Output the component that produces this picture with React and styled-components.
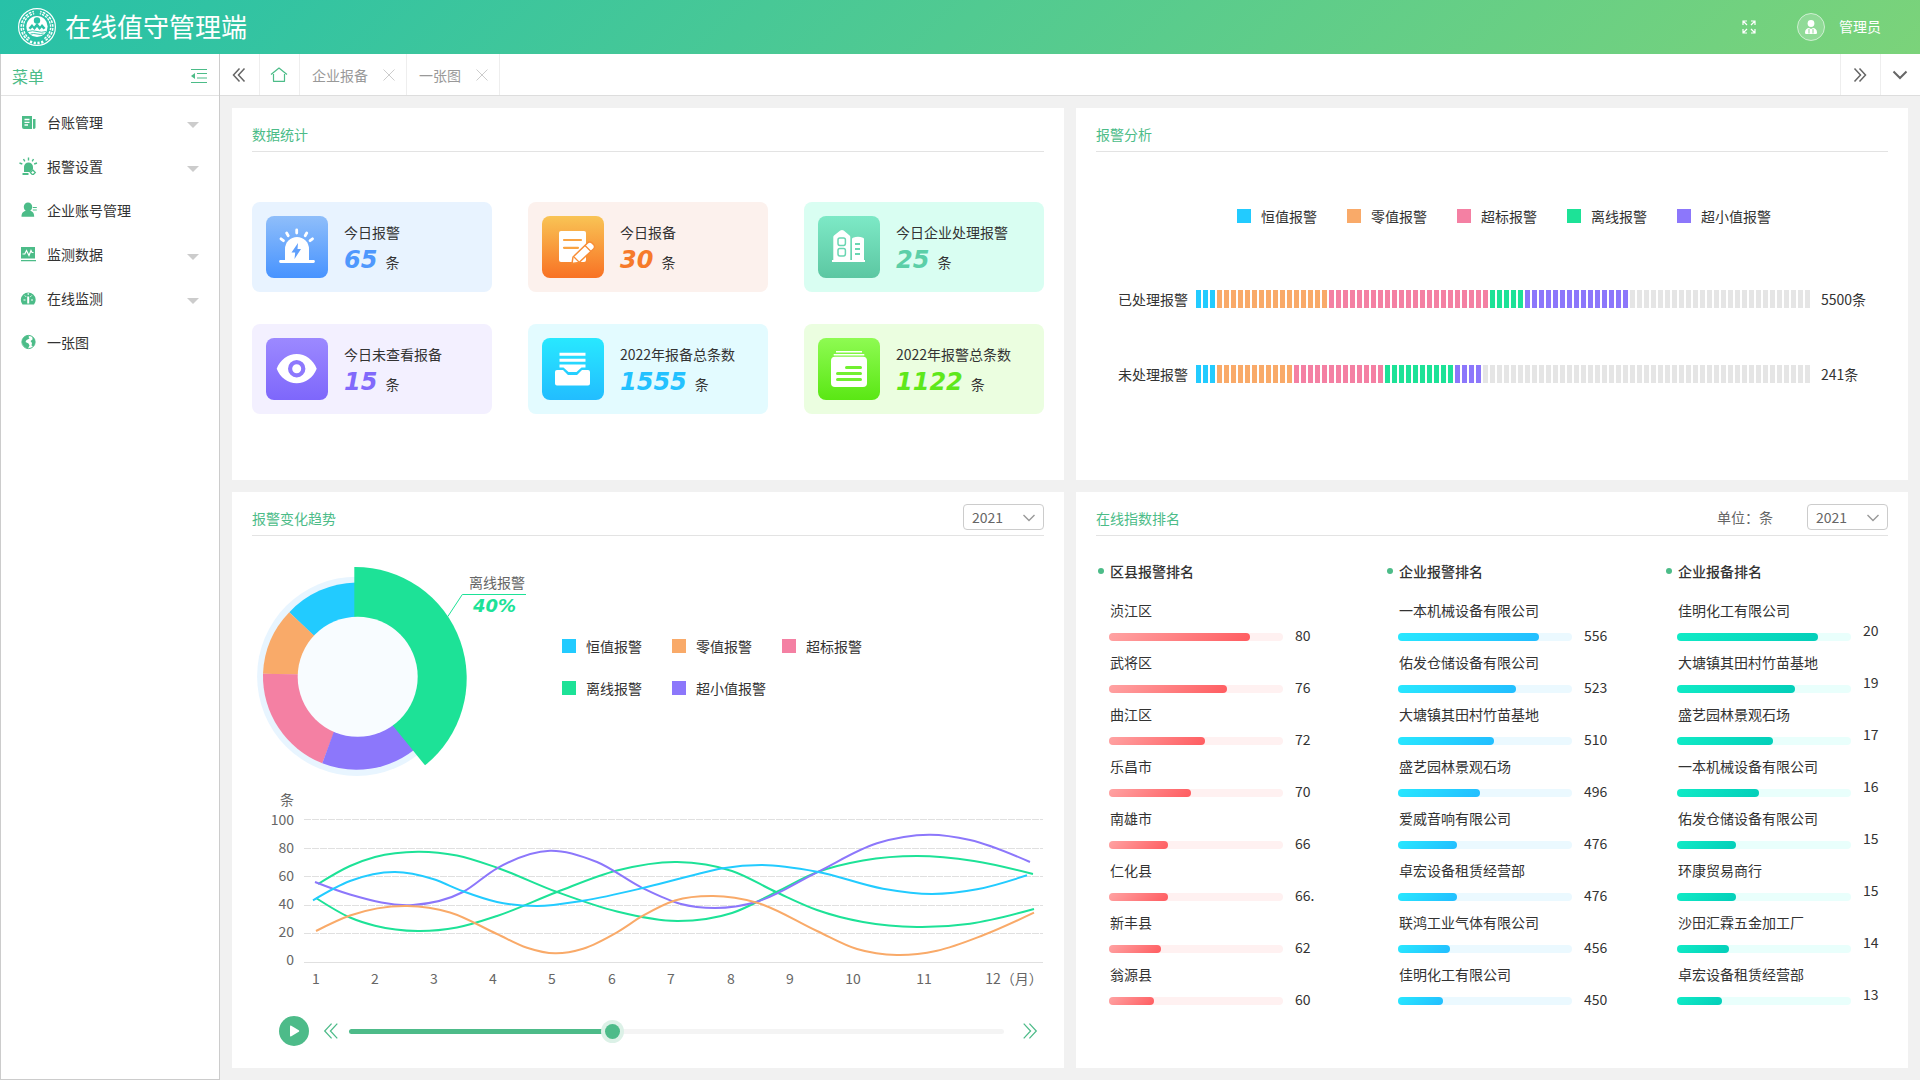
import React, { useState } from "react";
import styled, { createGlobalStyle } from "styled-components";

const GlobalStyle = createGlobalStyle`
  * {
    box-sizing: border-box;
  }
  body {
    margin: 0;
    background: #f1f1f1;
    color: #333;
    font-family: "Noto Sans CJK SC", "Noto Sans", sans-serif;
    font-size: 14px;
    line-height: 24px;
  }
  ul {
    list-style: none;
    margin: 0;
    padding: 0;
  }
  h1, h2, h3, p {
    margin: 0;
    font-weight: 400;
  }
  button {
    padding: 0;
    border: 0;
    background: none;
    font: inherit;
    color: inherit;
    cursor: pointer;
  }
  a {
    color: inherit;
    text-decoration: none;
  }
  svg {
    display: block;
    flex: none;
  }
`;

const Page = styled.div`
  display: flex;
  flex-direction: column;
  min-height: 100vh;
`;

const Header = styled.header`
  display: flex;
  align-items: center;
  height: 54px;
  padding: 0 39px 0 17px;
  background: linear-gradient(135deg, #27c1a8, #7bd37a);
  color: #fff;
  h1 {
    flex: 1;
    margin-left: 8px;
    padding-bottom: 2px;
    font-size: 26px;
    line-height: 38px;
  }
`;

const UserButton = styled.button`
  display: flex;
  align-items: center;
  gap: 14px;
  margin-left: 41px;
  span {
    padding-bottom: 2px;
  }
`;

const Body = styled.div`
  display: flex;
  flex: 1;
`;

const Sidebar = styled.nav`
  width: 220px;
  flex: none;
  border: 1px solid #ccc;
  border-top: 0;
  background: #fff;
`;

const SidebarHead = styled.div`
  display: flex;
  justify-content: space-between;
  align-items: center;
  height: 42px;
  padding: 2px 12px 0 11px;
  border-bottom: 1px solid #e3e3e3;
  color: #4cbc88;
  h2 {
    font-size: 16px;
  }
`;

const MenuList = styled.ul`
  padding-top: 4px;
`;

const MenuLink = styled.a`
  display: flex;
  align-items: center;
  height: 44px;
  padding: 0 20px 0 18px;
  span {
    flex: 1;
    margin-left: 8px;
  }
`;

const Caret = styled.i`
  margin-top: 5px;
  border: 6px solid transparent;
  border-top-color: #ccc;
  border-bottom: 0;
`;

const Main = styled.main`
  display: flex;
  flex-direction: column;
  flex: 1;
  min-width: 0;
`;

const TabBar = styled.div`
  display: flex;
  height: 42px;
  border-bottom: 1px solid #ddd;
  background: #fff;
  color: #666;
`;

const TabButton = styled.button`
  display: flex;
  align-items: center;
  justify-content: center;
  width: 40px;
  padding-right: 2px;
  border: 0 solid #eee;
  border-right-width: ${(props) => (props.$side === "right" ? 0 : "1px")};
  border-left-width: ${(props) => (props.$side === "right" ? "1px" : 0)};
`;

const Tab = styled.div`
  display: flex;
  align-items: center;
  gap: 15px;
  padding: 0 11px 0 12px;
  border-right: 1px solid #eee;
  color: #999;
`;

const Spacer = styled.div`
  flex: 1;
`;

const Dashboard = styled.div`
  display: grid;
  grid-template-columns: 1fr 1fr;
  grid-template-rows: 31fr 48fr;
  gap: 12px;
  flex: 1;
  padding: 12px;
`;

const Panel = styled.section`
  padding: 0 20px;
  background: #fff;
`;

const PanelHead = styled.div`
  display: flex;
  align-items: flex-end;
  height: 44px;
  padding-bottom: 5px;
  border-bottom: 1px solid #e3e3e3;
  h2 {
    flex: 1;
    font-size: 14px;
    color: #4cbc88;
  }
  p {
    margin-right: 34px;
    line-height: 26px;
    color: #666;
  }
`;

const SelectBox = styled.div`
  position: relative;
  select {
    display: block;
    width: 81px;
    height: 26px;
    padding: 0 8px;
    appearance: none;
    border: 1px solid #ccc;
    border-radius: 4px;
    background: #fff;
    font: inherit;
    line-height: 24px;
    color: #666;
  }
  svg {
    position: absolute;
    top: 10px;
    right: 9px;
    pointer-events: none;
  }
`;

const CardGrid = styled.ul`
  display: grid;
  grid-template-columns: repeat(3, 1fr);
  gap: 32px 36px;
  padding: 50px 0;
`;

const Card = styled.li`
  display: flex;
  height: 90px;
  padding: 14px;
  border-radius: 8px;
  background: ${(props) => props.$background};
`;

const CardIcon = styled.div`
  width: 62px;
  height: 62px;
  border-radius: 8px;
  background: linear-gradient(${(props) => props.$from}, ${(props) => props.$to});
`;

const CardText = styled.div`
  margin-left: 16px;
  padding-top: 4px;
`;

const CardValue = styled.p`
  display: flex;
  align-items: baseline;
  gap: 8px;
  margin-top: 2px;
  line-height: 28px;
  strong {
    font: italic 700 24px/28px "DejaVu Sans", sans-serif;
    color: ${(props) => props.$color};
  }
`;

const Legend = styled.ul`
  display: grid;
  grid-template-columns: repeat(${(props) => props.$columns}, 80px);
  gap: 18px 30px;
`;

const LegendItem = styled.li`
  display: flex;
  align-items: center;
  gap: 10px;
  white-space: nowrap;
  &::before {
    content: "";
    flex: none;
    width: 14px;
    height: 14px;
    background: ${(props) => props.$color};
  }
`;

const Analysis = styled.div`
  display: flex;
  flex-direction: column;
  align-items: center;
  padding: 52px 0 53px 10px;
`;

const SegmentList = styled.ul`
  display: flex;
  flex-direction: column;
  gap: 51px;
  width: 100%;
  padding: 59px 0 0 12px;
`;

const SegmentRow = styled.li`
  display: flex;
  align-items: center;
  > span:last-child {
    width: 67px;
  }
`;

const SegmentBar = styled.div`
  display: flex;
  flex: 1;
  gap: 2px;
  height: 18px;
  margin: 0 11px 0 8px;
`;

const Segment = styled.i`
  flex: 1;
  background: ${(props) => props.$color};
`;

const Share = styled.div`
  display: flex;
  align-items: center;
  gap: 32px;
  padding-top: 24px;
  > ul {
    margin-bottom: 6px;
  }
  svg text {
    font-size: 14px;
    fill: #666;
  }
  svg .percent {
    font: italic 700 18px "DejaVu Sans", sans-serif;
    fill: #1de297;
  }
`;

const LineChart = styled.svg`
  width: 100%;
  margin-top: 4px;
  text {
    font-size: 14px;
    fill: #666;
  }
`;

const Player = styled.div`
  display: flex;
  align-items: center;
  padding: 24px 6px 22px 27px;
  color: #4dbb89;
`;

const PlayButton = styled.button`
  display: flex;
  align-items: center;
  justify-content: center;
  width: 30px;
  height: 30px;
  margin-right: 14px;
  border-radius: 50%;
  background: #4dbb89;
`;

const Range = styled.input`
  flex: 1;
  height: 5px;
  margin: 0 18px 0 10px;
  appearance: none;
  border-radius: 3px;
  background: linear-gradient(
    90deg,
    #4dbb89 ${(props) => props.value}%,
    #f4f4f4 ${(props) => props.value}%
  );
  &::-webkit-slider-thumb {
    appearance: none;
    width: 15px;
    height: 15px;
    border-radius: 50%;
    background: #4dbb89;
    box-shadow: 0 0 0 4px #dcf1e7;
  }
`;

const RankGrid = styled.div`
  display: grid;
  grid-template-columns: 289fr 279fr 222fr;
  padding: 23px 0 24px 2px;
`;

const RankTitle = styled.h3`
  display: flex;
  align-items: center;
  gap: 6px;
  margin-bottom: 15px;
  font-size: 14px;
  font-weight: 500;
  &::before {
    content: "";
    width: 6px;
    height: 6px;
    border-radius: 50%;
    background: #4cbc88;
  }
`;

const RankItem = styled.li`
  padding-left: 12px;
  white-space: nowrap;
`;

const Meter = styled.div`
  display: flex;
  align-items: flex-start;
  gap: 12px;
  height: 28px;
  margin-left: -1px;
  line-height: ${(props) => (props.$raised ? "16px" : "26px")};
`;

const MeterTrack = styled.div`
  width: 174px;
  height: 8px;
  margin-top: 11px;
  border-radius: 4px;
  background: ${(props) => props.$color};
`;

const MeterFill = styled.div`
  height: 8px;
  border-radius: 4px;
  background: linear-gradient(135deg, ${(props) => props.$from}, ${(props) => props.$to});
`;

const alarmTypes = [
  { name: "恒值报警", color: "#22cbff" },
  { name: "零值报警", color: "#f9aa69" },
  { name: "超标报警", color: "#f480a3" },
  { name: "离线报警", color: "#1de297" },
  { name: "超小值报警", color: "#8c77fb" },
];

const SEGMENT_COUNT = 88;

const analysisRows = [
  { name: "已处理报警", counts: [3, 16, 23, 5, 15], total: "5500条" },
  { name: "未处理报警", counts: [3, 11, 13, 10, 4], total: "241条" },
];

const green = "#4cbc88";

const menuItems = [
  {
    name: "台账管理",
    open: true,
    icon: (
      <>
        <path d="M2 2h10v13H4a2 2 0 0 1-2-2z" fill={green} />
        <path d="M13 5h2.500v8.500a1.500 1.500 0 0 1-2.500 1z" fill={green} />
        <path d="M4.500 5.500h5M4.500 8.300h5M4.500 11h3.500" stroke="#fff" strokeWidth="1.300" />
      </>
    ),
  },
  {
    name: "报警设置",
    open: true,
    icon: (
      <>
        <path d="M4 14V9a4.500 4.500 0 0 1 9 0v2l-3 3zM2.500 15h6v2h-6z" fill={green} />
        <path
          d="M8.500-.500v3M3.500 1l1.300 2.300M13.500 1l-1.300 2.300M-.500 5l2.800 1M17 5l-2.800 1"
          stroke={green}
          strokeWidth="1.400"
        />
        <path d="M12.800 12l2.500 2.500-2.500 2.500-2.500-2.500z" fill="#fff" stroke={green} strokeWidth="1.300" />
      </>
    ),
  },
  {
    name: "企业账号管理",
    icon: (
      <>
        <path
          d="M8 .500a4.200 4.200 0 0 1 4.200 4.300c0 1.800-.800 3.200-2 4 2.400.700 4 2.200 4 6H1.500c0-3.800 1.800-5.300 4.300-6-1.300-.800-2-2.200-2-4A4.200 4.200 0 0 1 8 .500z"
          fill={green}
        />
        <path d="M12.800 5.500h4M12.800 8h4" stroke={green} />
      </>
    ),
  },
  {
    name: "监测数据",
    open: true,
    icon: (
      <>
        <path d="M1 1h14v11.500H1zM1 14h15v1.200H1z" fill={green} />
        <path d="M2.500 8h2.300l1.700-3.500 2.500 5 2-5 1 2h1.500" fill="none" stroke="#fff" strokeWidth="1.200" />
      </>
    ),
  },
  {
    name: "在线监测",
    open: true,
    icon: (
      <>
        <path d="M2.500 14.500A7.400 7.400 0 1 1 14 14.500z" fill={green} />
        <path d="M8.200 6.500v7" stroke="#fff" strokeWidth="2" />
        <path d="M8.200 3v2M3.500 10h2M11 10h2M4.800 5.500l1.300 1.300M11.700 5.500l-1.300 1.300" stroke="#fff" />
      </>
    ),
  },
  {
    name: "一张图",
    icon: (
      <>
        <circle cx="8.500" cy="8" r="6.600" fill="#fff" stroke={green} />
        <path d="M2 8.500C1.800 4 5 1 9.500 1.500L8.500 3l1 1.500L6.500 6l-1 2 3 1.500 1 2-1.500 3C5 14 3 12 2 8.500z" fill={green} />
        <path d="M12.500 2.800c3 2 3.500 6.500 1 9.700l-2-1 .500-2.500-1.500-2 2-1.500z" fill={green} />
      </>
    ),
  },
];

const stats = [
  {
    name: "今日报警",
    value: "65",
    background: "#e8f3ff",
    from: "#8fbefa",
    to: "#4793ff",
    color: "#4f98fd",
    icon: (
      <>
        <path d="M19 45V33a12 12 0 0 1 24 0v12z" fill="#fff" />
        <path
          d="M14.500 45.500h33M30.700 14v3M20.700 17l1.500 2.700M40.700 17l-1.500 2.700M15 22.800l2.400 1.900M46.500 22.800l-2.400 1.900"
          stroke="#fff"
          strokeWidth="2.800"
          strokeLinecap="round"
        />
        <path d="M32 27l-6.500 9.500h3.700L28.500 43 35 33h-3.500z" fill="#5f9ffc" />
      </>
    ),
  },
  {
    name: "今日报备",
    value: "30",
    background: "#fcf1ed",
    from: "#f9c455",
    to: "#f87224",
    color: "#f67a2a",
    icon: (
      <>
        <rect x="17" y="15" width="27" height="31" rx="2" fill="#fff" />
        <path d="M22 24h17M22 31.800h14" stroke="#f9a443" strokeWidth="2.200" strokeLinecap="round" />
        <path
          d="M30 47.500l1-6.500 14.500-14a3 3 0 0 1 4.500 0l1.500 1.500a3 3 0 0 1 0 4.500l-14.500 13.500z"
          fill="#fff"
          stroke="#f88d36"
          strokeWidth="1.500"
        />
        <path d="M43 29.500l6 6M32 41l5 5" stroke="#f88d36" strokeWidth="1.300" />
      </>
    ),
  },
  {
    name: "今日企业处理报警",
    value: "25",
    background: "#d9fef2",
    from: "#7de9c6",
    to: "#5cc7a2",
    color: "#5ccfa8",
    icon: (
      <>
        <path d="M15.300 45V21q0-1 1-1.800l6-4.600q1.700-1.200 3.400 0l5.600 4.600q1 .8 1 1.800v24z" fill="#fff" />
        <path d="M34 45V23q0-1 1-1.300 5-1.700 10 0 1 .3 1 1.300v22z" fill="#fff" />
        <path d="M14 45h33" stroke="#fff" strokeWidth="1.800" />
        <rect x="20" y="22" width="7.400" height="7.400" rx="1.800" fill="none" stroke="#6ad6b2" strokeWidth="1.500" />
        <rect x="20" y="32.500" width="7.400" height="7.400" rx="1.800" fill="none" stroke="#6ad6b2" strokeWidth="1.500" />
        <path d="M37 28h5M37 33h5M37 38h5" stroke="#6ad6b2" strokeWidth="1.800" />
      </>
    ),
  },
  {
    name: "今日未查看报备",
    value: "15",
    background: "#f3f0ff",
    from: "#9c89ff",
    to: "#7e67fb",
    color: "#8169fb",
    icon: (
      <>
        <path
          d="M10.700 30.700C14 22 22 16 30.700 16s16.700 6 20 14.700c-3.300 8.700-11.300 14.600-20 14.600s-16.700-5.900-20-14.600z"
          fill="#fff"
        />
        <circle cx="30.700" cy="30.700" r="6.600" fill="#fff" stroke="#8d78fd" strokeWidth="4.200" />
      </>
    ),
  },
  {
    name: "2022年报备总条数",
    value: "1555",
    background: "#e3fbff",
    from: "#28e8ff",
    to: "#22bdff",
    color: "#23c1ff",
    icon: (
      <>
        <path d="M17.500 16.300h26M17.500 22.300h26" stroke="#fff" strokeWidth="3" />
        <path d="M17.500 26.500h26v3h-4L34.500 34h-8l-5-4.500h-4z" fill="#fff" />
        <path
          d="M15 32h6l5 5h9l5-5h6a2 2 0 0 1 2 2v11.500a2 2 0 0 1-2 2H15a2 2 0 0 1-2-2V34a2 2 0 0 1 2-2z"
          fill="#fff"
        />
      </>
    ),
  },
  {
    name: "2022年报警总条数",
    value: "1122",
    background: "#ebfee0",
    from: "#8efb52",
    to: "#5ae714",
    color: "#5ee81b",
    icon: (
      <>
        <path d="M18 13.700h26M15.700 16.800h30.600" stroke="#fff" strokeWidth="1.500" />
        <rect x="13" y="18.700" width="36" height="30.300" rx="4" fill="#fff" />
        <path
          d="M28.500 29.500h14M19.500 35.500h23M19.500 41.500h23"
          stroke="#71f030"
          strokeWidth="3"
          strokeLinecap="round"
        />
      </>
    ),
  },
];

const shares = [
  { color: "#22cbff", path: "M104 116L37.300 52.300A93.800 93.800 0 0 1 104 22.400z" },
  { color: "#f9aa69", path: "M105 116L11 113.700A93.800 93.800 0 0 1 37.300 52.300z" },
  { color: "#f480a3", path: "M104 115.200L70.300 203.300A93.800 93.800 0 0 1 11 113.700z" },
  { color: "#8c77fb", path: "M103 114L162 190A93.800 93.800 0 0 1 70.300 203.300z" },
  { color: "#1de297", path: "M102.300 118L102.300 7A111.400 111.400 0 0 1 173 205.300z" },
];

const series = [
  {
    color: "#1de297",
    points: [[66, 100], [98, 82], [123, 73], [166, 67.700], [205, 71.500], [245, 83.700], [305, 108], [365, 127.500], [426, 137], [480, 129], [525, 107.700], [565, 88.300], [611, 76.500], [665, 72], [722, 77], [781, 90]],
  },
  {
    color: "#1de297",
    points: [[64, 114], [98, 133.500], [123, 141.700], [166, 147], [205, 143.500], [245, 132], [305, 108], [365, 86.500], [425, 78], [480, 87], [525, 108.500], [565, 126], [611, 138], [665, 143], [718, 139.700], [782, 125]],
  },
  {
    color: "#8c77fb",
    points: [[63, 98], [98, 110.500], [161, 121], [211, 108], [245, 84.300], [298, 66.700], [345, 78], [391, 104.300], [428, 119.700], [463, 124], [505, 117.700], [565, 88.300], [625, 59.300], [678, 50.700], [718, 56], [778, 78]],
  },
  {
    color: "#22cbff",
    points: [[61, 116.300], [98, 97], [143, 88], [181, 95], [211, 107.300], [245, 118], [285, 122], [331, 116.700], [391, 104], [438, 92], [471, 84.200], [510, 81], [565, 87.700], [631, 104.700], [680, 110], [725, 105.300], [775, 91.300]],
  },
  {
    color: "#f9aa69",
    points: [[64, 147], [98, 131.500], [155, 122], [198, 128.500], [245, 150], [275, 163.700], [303, 169.300], [331, 164.700], [365, 148.300], [391, 131.700], [423, 116.500], [461, 112], [505, 118.700], [565, 147], [605, 165], [645, 171], [685, 166.700], [731, 151.300], [782, 128.700]],
  },
];

const months = [
  ["1", 64], ["2", 123], ["3", 182], ["4", 241], ["5", 300], ["6", 360], ["7", 419],
  ["8", 479], ["9", 538], ["10", 601], ["11", 672], ["12（月）", 762],
];

const percents = [81, 68, 55, 47, 34, 34, 30, 26];

const rankings = [
  {
    title: "区县报警排名",
    from: "#ffa3a3",
    to: "#ff5c60",
    track: "#fff1f1",
    rows: [
      ["浈江区", "80"], ["武将区", "76"], ["曲江区", "72"], ["乐昌市", "70"],
      ["南雄市", "66"], ["仁化县", "66."], ["新丰县", "62"], ["翁源县", "60"],
    ],
  },
  {
    title: "企业报警排名",
    from: "#28e8ff",
    to: "#22bdff",
    track: "#ebf9ff",
    rows: [
      ["一本机械设备有限公司", "556"], ["佑发仓储设备有限公司", "523"],
      ["大塘镇其田村竹苗基地", "510"], ["盛艺园林景观石场", "496"],
      ["爱威音响有限公司", "476"], ["卓宏设备租赁经营部", "476"],
      ["联鸿工业气体有限公司", "456"], ["佳明化工有限公司", "450"],
    ],
  },
  {
    title: "企业报备排名",
    from: "#10ebc6",
    to: "#03ceb9",
    track: "#e9fffc",
    raised: true,
    rows: [
      ["佳明化工有限公司", "20"], ["大塘镇其田村竹苗基地", "19"],
      ["盛艺园林景观石场", "17"], ["一本机械设备有限公司", "16"],
      ["佑发仓储设备有限公司", "15"], ["环康贸易商行", "15"],
      ["沙田汇霖五金加工厂", "14"], ["卓宏设备租赁经营部", "13"],
    ],
  },
];

// smooth curve through the points, each slope is that of the parabola
// through the point and its two neighbours
const toPath = (points) => {
  const last = points.length - 1;
  const rise = (i) => (points[i + 1][1] - points[i][1]) / (points[i + 1][0] - points[i][0]);
  const slope = (i) => {
    if (i === 0) return (3 * rise(0) - slope(1)) / 2;
    if (i === last) return (3 * rise(last - 1) - slope(last - 1)) / 2;
    const before = points[i][0] - points[i - 1][0];
    const after = points[i + 1][0] - points[i][0];
    return (rise(i - 1) * after + rise(i) * before) / (before + after);
  };
  return points.reduce((path, [x, y], i) => {
    if (i === 0) return `M${x} ${y}`;
    const [px, py] = points[i - 1];
    const dx = (x - px) / 3;
    return `${path}C${px + dx} ${py + dx * slope(i - 1)} ${x - dx} ${y - dx * slope(i)} ${x} ${y}`;
  }, "");
};

const Logo = () => (
  <svg width="40" height="40" viewBox="0 0 40 40" fill="none">
    <circle cx="20" cy="20" r="18.400" stroke="#fff" strokeWidth="1.200" />
    <path d="M12 32.500A14.800 14.800 0 0 1 17 5.600M28 32.500A14.800 14.800 0 0 0 23 5.600" stroke="#fff" strokeWidth="3.600" strokeDasharray="2.600 1.100" />
    <path d="M12 32.500A14.800 14.800 0 0 1 17 5.600M28 32.500A14.800 14.800 0 0 0 23 5.600" stroke="#29c1a6" strokeWidth=".8" />
    <circle cx="20" cy="19.500" r="10.600" fill="#fff" />
    <circle cx="20" cy="13.500" r="3.200" fill="#29c1a6" />
    <path d="M11.500 21l3.500-4 2 2.500 3-3.500 3 3.500 2-2.500 3.500 4-2 1.500-1.800-2-2.200 2.500-2.500-3-2.500 3-2.200-2.500-1.800 2z" fill="#29c1a6" />
    <path d="M11 24.500q4.500-1.500 9 0t9 0M13.500 27q3-1 6.500 0t6.500 0" stroke="#29c1a6" strokeWidth=".9" />
    <path d="M13 34.500q7 3 14 0" stroke="#fff" strokeWidth="2.600" strokeDasharray="2.200 1.600" />
  </svg>
);

const DoubleArrow = ({ right, size = 14, width = 1.5 }) => (
  <svg width={size} height={size} viewBox="0 0 14 14" fill="none" stroke="currentColor" strokeWidth={width}>
    <path d={right ? "M1.500.500L7.500 7l-6 6.500M6.500.500l6 6.500-6 6.500" : "M7.500.500L1.500 7l6 6.500M12.500.500L6.500 7l6 6.500"} />
  </svg>
);

const CloseIcon = () => (
  <svg width="12" height="12" viewBox="0 0 12 12" stroke="#ccc">
    <path d="M.500.500l11 11M11.500.500l-11 11" />
  </svg>
);

const YearSelect = ({ label }) => (
  <SelectBox>
    <select aria-label={label} defaultValue="2021">
      <option>2021</option>
      <option>2022</option>
    </select>
    <svg width="12" height="8" viewBox="0 0 12 8" fill="none" stroke="#999" strokeWidth="1.400">
      <path d="M.500 1L6 6.500 11.500 1" />
    </svg>
  </SelectBox>
);

const AlarmLegend = ({ columns }) => (
  <Legend $columns={columns}>
    {alarmTypes.map((type) => (
      <LegendItem key={type.name} $color={type.color}>
        {type.name}
      </LegendItem>
    ))}
  </Legend>
);

const segmentColor = (counts, index) => {
  let end = 0;
  const found = counts.findIndex((count) => {
    end += count;
    return index < end;
  });
  return found < 0 ? "#e5e5e5" : alarmTypes[found].color;
};

const App = () => {
  const [progress, setProgress] = useState(40);

  return (
    <Page>
      <GlobalStyle />
      <Header>
        <Logo />
        <h1>在线值守管理端</h1>
        <button aria-label="全屏">
          <svg width="14" height="14" viewBox="0 0 14 14" fill="none" stroke="#fff" strokeWidth="1.200">
            <path d="M1 5V1h4M1 1l4 4M9 1h4v4M13 1L9 5M1 9v4h4M1 13l4-4M13 9v4H9M13 13L9 9" />
          </svg>
        </button>
        <UserButton>
          <svg width="28" height="28" viewBox="0 0 28 28">
            <circle cx="14" cy="14" r="13.500" fill="#fff" fillOpacity=".2" stroke="#fff" strokeOpacity=".6" />
            <circle cx="14" cy="10.500" r="3.400" fill="#fff" />
            <path d="M8 19.500c0-3 2-4.500 4-4.500l2 1 2-1c2 0 4 1.500 4 4.500 0 1-.5 1.500-1.500 1.500h-9c-1 0-1.500-.5-1.500-1.500z" fill="#fff" />
            <path d="M12 16v4.500M16 16v4.500" stroke="#8cd993" />
          </svg>
          <span>管理员</span>
        </UserButton>
      </Header>
      <Body>
        <Sidebar>
          <SidebarHead>
            <h2>菜单</h2>
            <button aria-label="收起菜单">
              <svg width="16" height="14" viewBox="0 0 16 14">
                <path d="M0 .500h16M6 4.500h10M6 9h10M0 13.500h16" stroke="#4cbc88" strokeWidth="1.200" />
                <path d="M0 7l4-3v6z" fill="#4cbc88" />
              </svg>
            </button>
          </SidebarHead>
          <MenuList>
            {menuItems.map((item) => (
              <li key={item.name}>
                <MenuLink href="#">
                  <svg width="20" height="18" viewBox="-1 -1 20 18">
                    {item.icon}
                  </svg>
                  <span>{item.name}</span>
                  {item.open && <Caret />}
                </MenuLink>
              </li>
            ))}
          </MenuList>
        </Sidebar>
        <Main>
          <TabBar>
            <TabButton aria-label="向左">
              <DoubleArrow />
            </TabButton>
            <TabButton aria-label="首页">
              <svg width="18" height="16" viewBox="0 0 18 16" fill="none" stroke="#4cbc88" strokeWidth="1.200">
                <path d="M3.500 7v7.300h11V7M1 7.500L9 1l8 6.500" strokeLinejoin="round" />
              </svg>
            </TabButton>
            {["企业报备", "一张图"].map((name) => (
              <Tab key={name}>
                <button>{name}</button>
                <button aria-label={`关闭${name}`}>
                  <CloseIcon />
                </button>
              </Tab>
            ))}
            <Spacer />
            <TabButton $side="right" aria-label="向右">
              <DoubleArrow right />
            </TabButton>
            <TabButton $side="right" aria-label="更多">
              <svg width="16" height="10" viewBox="0 0 16 10" fill="none" stroke="#666" strokeWidth="2">
                <path d="M1.500 1.500L8 8l6.500-6.500" />
              </svg>
            </TabButton>
          </TabBar>
          <Dashboard>
            <Panel>
              <PanelHead>
                <h2>数据统计</h2>
              </PanelHead>
              <CardGrid>
                {stats.map((stat) => (
                  <Card key={stat.name} $background={stat.background}>
                    <CardIcon $from={stat.from} $to={stat.to}>
                      <svg width="62" height="62" viewBox="0 0 62 62" fill="none">
                        {stat.icon}
                      </svg>
                    </CardIcon>
                    <CardText>
                      <p>{stat.name}</p>
                      <CardValue $color={stat.color}>
                        <strong>{stat.value}</strong>条
                      </CardValue>
                    </CardText>
                  </Card>
                ))}
              </CardGrid>
            </Panel>
            <Panel>
              <PanelHead>
                <h2>报警分析</h2>
              </PanelHead>
              <Analysis>
                <AlarmLegend columns={5} />
                <SegmentList>
                  {analysisRows.map((row) => (
                    <SegmentRow key={row.name}>
                      <span>{row.name}</span>
                      <SegmentBar>
                        {Array.from({ length: SEGMENT_COUNT }, (_, i) => (
                          <Segment key={i} $color={segmentColor(row.counts, i)} />
                        ))}
                      </SegmentBar>
                      <span>{row.total}</span>
                    </SegmentRow>
                  ))}
                </SegmentList>
              </Analysis>
            </Panel>
            <Panel>
              <PanelHead>
                <h2>报警变化趋势</h2>
                <YearSelect label="趋势年份" />
              </PanelHead>
              <Share>
                <svg width="278" height="220" viewBox="0 0 278 220">
                  <circle cx="104.700" cy="116.300" r="99.600" fill="#e8f5ff" />
                  {shares.map((share) => (
                    <path key={share.color} d={share.path} fill={share.color} />
                  ))}
                  <circle cx="105.700" cy="116.700" r="60" fill="#f8fcff" />
                  <path d="M195.700 56.700L210.300 34.500H274" fill="none" stroke="#1de297" />
                  <text x="217" y="28">离线报警</text>
                  <text className="percent" x="221" y="52">40%</text>
                </svg>
                <AlarmLegend columns={3} />
              </Share>
              <LineChart viewBox="0 0 792 208">
                <text x="42" y="21" textAnchor="end">条</text>
                {[100, 80, 60, 40, 20, 0].map((value, i) => (
                  <text key={value} x="42" y={41 + i * 28} textAnchor="end">
                    {value}
                  </text>
                ))}
                {[35.5, 64.5, 92.5, 121.5, 149.5].map((y) => (
                  <path key={y} d={`M52 ${y}H791`} stroke="#e0e0e0" strokeDasharray="7 1" />
                ))}
                <path d="M52 178.500H791" stroke="#e0e0e0" />
                {series.map((line, i) => (
                  <path key={i} d={toPath(line.points)} fill="none" stroke={line.color} strokeWidth="2" />
                ))}
                {months.map(([name, x]) => (
                  <text key={name} x={x} y="200" textAnchor="middle">
                    {name}
                  </text>
                ))}
              </LineChart>
              <Player>
                <PlayButton aria-label="播放">
                  <svg width="12" height="12" viewBox="0 0 12 12" fill="#fff">
                    <path d="M2 1.500q0-1.500 1.300-.8l7.500 4.500q1 .8 0 1.600l-7.500 4.500Q2 12 2 10.500z" />
                  </svg>
                </PlayButton>
                <button aria-label="后退">
                  <DoubleArrow size={16} width={1.1} />
                </button>
                <Range
                  type="range"
                  aria-label="播放进度"
                  value={progress}
                  onChange={(e) => setProgress(Number(e.target.value))}
                />
                <button aria-label="前进">
                  <DoubleArrow right size={16} width={1.1} />
                </button>
              </Player>
            </Panel>
            <Panel>
              <PanelHead>
                <h2>在线指数排名</h2>
                <p>单位：条</p>
                <YearSelect label="排名年份" />
              </PanelHead>
              <RankGrid>
                {rankings.map((ranking) => (
                  <div key={ranking.title}>
                    <RankTitle>{ranking.title}</RankTitle>
                    <ul>
                      {ranking.rows.map(([name, value], i) => (
                        <RankItem key={name}>
                          <p>{name}</p>
                          <Meter $raised={ranking.raised}>
                            <MeterTrack $color={ranking.track}>
                              <MeterFill
                                $from={ranking.from}
                                $to={ranking.to}
                                style={{ width: `${percents[i]}%` }}
                              />
                            </MeterTrack>
                            <span>{value}</span>
                          </Meter>
                        </RankItem>
                      ))}
                    </ul>
                  </div>
                ))}
              </RankGrid>
            </Panel>
          </Dashboard>
        </Main>
      </Body>
    </Page>
  );
};

export default App;
